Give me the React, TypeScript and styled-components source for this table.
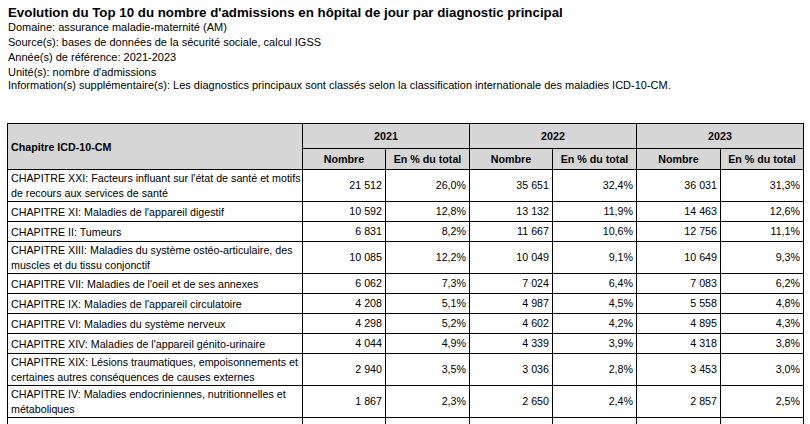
import React from "react";
import styled, { createGlobalStyle } from "styled-components";

const Global = createGlobalStyle`
  html, body { margin: 0; padding: 0; background: #ffffff; }
  body { font-family: "Liberation Sans", Arial, sans-serif; color: #000; }
`;

const Page = styled.div`
  padding: 7px 0 0 8px;
`;

const Title = styled.h1`
  margin: 0;
  font-size: 13.3px;
  font-weight: bold;
  line-height: 12px;
`;

const Meta = styled.div`
  font-size: 11px;
  line-height: 15px;
  padding-top: 1px;
`;

const MetaLine = styled.div<{ $shift?: number }>`
  margin-top: ${(p) => p.$shift || 0}px;
`;

const Table = styled.table`
  margin: 30px 0 0 -1px;
  border-collapse: collapse;
  table-layout: fixed;
  width: 797px;
  font-size: 10.7px;
`;

const HeadCell = styled.th<{ $align?: string; $h?: number }>`
  background: #d6d6d6;
  border: 1px solid #000;
  font-weight: bold;
  text-align: ${(p) => p.$align || "center"};
  padding: 0 3px;
  height: ${(p) => p.$h || 20}px;
  line-height: 14px;
  white-space: nowrap;
`;

const Row = styled.tr`
  height: 20px;
`;

const LabelCell = styled.td`
  border: 1px solid #000;
  padding: 1px 3px 0 3px;
  line-height: 15px;
  white-space: nowrap;
  vertical-align: middle;
`;

const NumCell = styled.td`
  border: 1px solid #000;
  padding: 0 3px;
  text-align: right;
  line-height: 15px;
  white-space: nowrap;
  vertical-align: middle;
`;

type Item = { label: string[]; v: [string, string, string, string, string, string] };

const rows: Item[] = [
  { label: ["CHAPITRE XXI: Facteurs influant sur l'état de santé et motifs", "de recours aux services de santé"], v: ["21 512", "26,0%", "35 651", "32,4%", "36 031", "31,3%"] },
  { label: ["CHAPITRE XI: Maladies de l'appareil digestif"], v: ["10 592", "12,8%", "13 132", "11,9%", "14 463", "12,6%"] },
  { label: ["CHAPITRE II: Tumeurs"], v: ["6 831", "8,2%", "11 667", "10,6%", "12 756", "11,1%"] },
  { label: ["CHAPITRE XIII: Maladies du système ostéo-articulaire, des", "muscles et du tissu conjonctif"], v: ["10 085", "12,2%", "10 049", "9,1%", "10 649", "9,3%"] },
  { label: ["CHAPITRE VII: Maladies de l'oeil et de ses annexes"], v: ["6 062", "7,3%", "7 024", "6,4%", "7 083", "6,2%"] },
  { label: ["CHAPITRE IX: Maladies de l'appareil circulatoire"], v: ["4 208", "5,1%", "4 987", "4,5%", "5 558", "4,8%"] },
  { label: ["CHAPITRE VI: Maladies du système nerveux"], v: ["4 298", "5,2%", "4 602", "4,2%", "4 895", "4,3%"] },
  { label: ["CHAPITRE XIV: Maladies de l'appareil génito-urinaire"], v: ["4 044", "4,9%", "4 339", "3,9%", "4 318", "3,8%"] },
  { label: ["CHAPITRE XIX: Lésions traumatiques, empoisonnements et", "certaines autres conséquences de causes externes"], v: ["2 940", "3,5%", "3 036", "2,8%", "3 453", "3,0%"] },
  { label: ["CHAPITRE IV: Maladies endocriniennes, nutritionnelles et", "métaboliques"], v: ["1 867", "2,3%", "2 650", "2,4%", "2 857", "2,5%"] },
];

const years = ["2021", "2022", "2023"];

export default function App() {
  return (
    <>
      <Global />
      <Page>
        <Title>Evolution du Top 10 du nombre d'admissions en hôpital de jour par diagnostic principal</Title>
        <Meta>
          <MetaLine>Domaine: assurance maladie-maternité (AM)</MetaLine>
          <MetaLine>Source(s): bases de données de la sécurité sociale, calcul IGSS</MetaLine>
          <MetaLine>Année(s) de référence: 2021-2023</MetaLine>
          <MetaLine>Unité(s): nombre d'admissions</MetaLine>
          <MetaLine $shift={-2}>Information(s) supplémentaire(s): Les diagnostics principaux sont classés selon la classification internationale des maladies ICD-10-CM.</MetaLine>
        </Meta>
        <Table>
          <colgroup>
            <col style={{ width: 295 }} />
            <col style={{ width: 83 }} />
            <col style={{ width: 84 }} />
            <col style={{ width: 83 }} />
            <col style={{ width: 84 }} />
            <col style={{ width: 84 }} />
            <col style={{ width: 83 }} />
          </colgroup>
          <thead>
            <tr>
              <HeadCell rowSpan={2} $align="left">Chapitre ICD-10-CM</HeadCell>
              {years.map((y) => (
                <HeadCell key={y} colSpan={2} $h={24}>{y}</HeadCell>
              ))}
            </tr>
            <tr>
              {years.map((y) => (
                <React.Fragment key={y}>
                  <HeadCell $h={20}>Nombre</HeadCell>
                  <HeadCell $h={20}>En % du total</HeadCell>
                </React.Fragment>
              ))}
            </tr>
          </thead>
          <tbody>
            {rows.map((r, i) => (
              <Row key={i}>
                <LabelCell>
                  {r.label.map((l, j) => (
                    <div key={j}>{l}</div>
                  ))}
                </LabelCell>
                {r.v.map((v, j) => (
                  <NumCell key={j}>{v}</NumCell>
                ))}
              </Row>
            ))}
            <Row>
              <LabelCell>&nbsp;</LabelCell>
              {[0, 1, 2, 3, 4, 5].map((j) => (
                <NumCell key={j}>&nbsp;</NumCell>
              ))}
            </Row>
          </tbody>
        </Table>
      </Page>
    </>
  );
}
